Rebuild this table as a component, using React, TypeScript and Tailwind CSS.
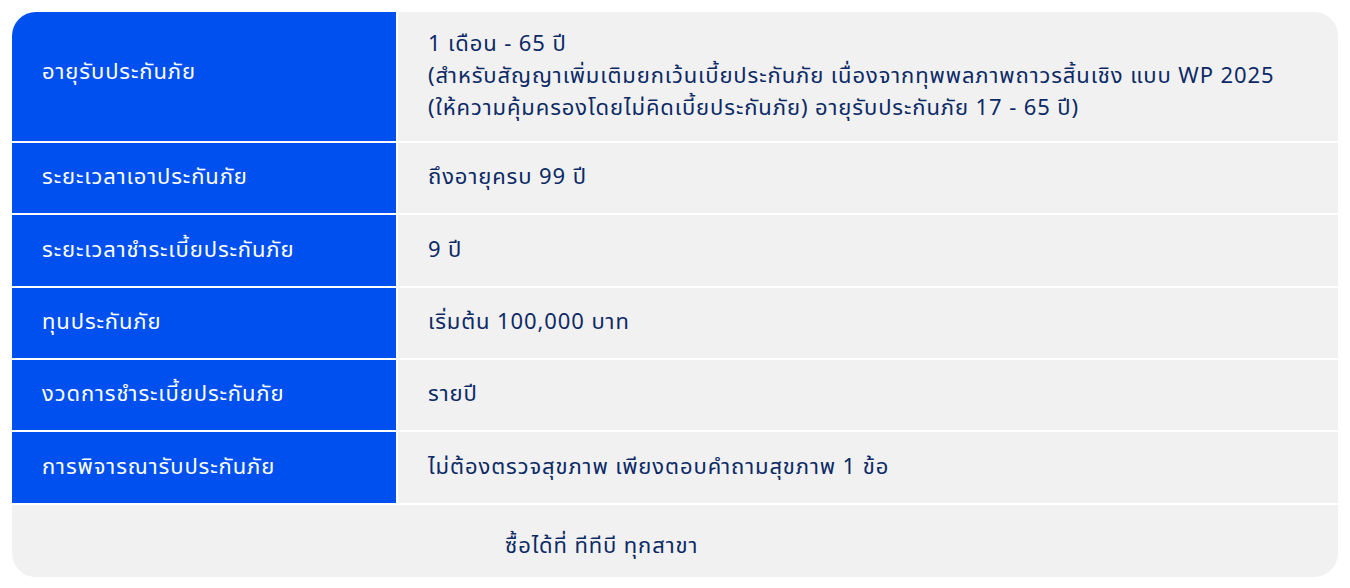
import React from "react";

const rows: { label: string; value: React.ReactNode; h: string }[] = [
  {
    label: "อายุรับประกันภัย",
    value: (
      <>
        <div>1 เดือน - 65 ปี</div>
        <div>(สำหรับสัญญาเพิ่มเติมยกเว้นเบี้ยประกันภัย เนื่องจากทุพพลภาพถาวรสิ้นเชิง แบบ WP 2025</div>
        <div>(ให้ความคุ้มครองโดยไม่คิดเบี้ยประกันภัย) อายุรับประกันภัย 17 - 65 ปี)</div>
      </>
    ),
    h: "h-[129px]",
  },
  { label: "ระยะเวลาเอาประกันภัย", value: "ถึงอายุครบ 99 ปี", h: "h-[70px]" },
  { label: "ระยะเวลาชำระเบี้ยประกันภัย", value: "9 ปี", h: "h-[71px]" },
  { label: "ทุนประกันภัย", value: "เริ่มต้น 100,000 บาท", h: "h-[70px]" },
  { label: "งวดการชำระเบี้ยประกันภัย", value: "รายปี", h: "h-[70px]" },
  { label: "การพิจารณารับประกันภัย", value: "ไม่ต้องตรวจสุขภาพ เพียงตอบคำถามสุขภาพ 1 ข้อ", h: "h-[71px]" },
];

export default function App() {
  return (
    <div
      className="min-h-[588px] w-full bg-white p-3"
      style={{ fontFamily: '"Noto Sans Thai", "Noto Sans", "Liberation Sans", sans-serif' }}
    >
      <div className="grid grid-cols-[384px_1fr] gap-[2px] overflow-hidden rounded-3xl bg-white text-[22px] leading-[32px] tracking-[0.9px]">
        {rows.map((r, i) => (
          <React.Fragment key={i}>
            <div className={`flex items-center bg-[#0050f0] pl-[30px] text-white ${r.h}`}>
              <span className={i === 0 ? "-mt-2" : ""}>{r.label}</span>
            </div>
            <div className={`flex flex-col justify-center bg-[#f1f1f1] pl-[30px] text-[#0c2a66] ${r.h}`}>
              {r.value}
            </div>
          </React.Fragment>
        ))}
        <div className="col-span-2 flex h-[72px] items-center bg-[#f1f1f1] pl-[493px] pt-3 text-[#0c2a66]">
          ซื้อได้ที่ ทีทีบี ทุกสาขา
        </div>
      </div>
    </div>
  );
}
